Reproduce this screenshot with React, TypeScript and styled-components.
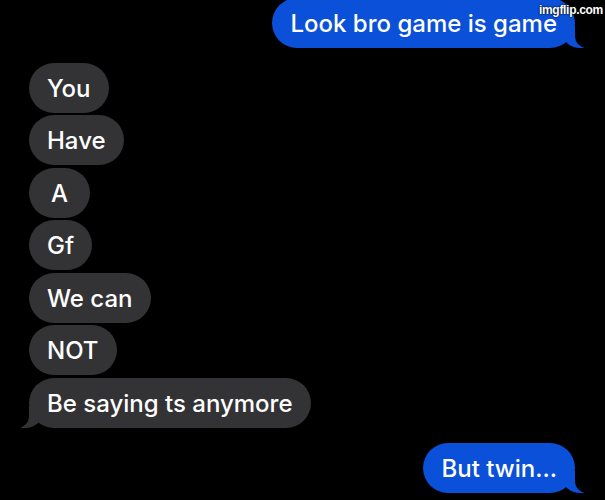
import styled, { createGlobalStyle, css } from 'styled-components';

const GlobalStyle = createGlobalStyle`
    html, body { margin: 0; padding: 0; background: #000; }
    body { width: 605px; height: 500px; overflow: hidden; }
`;

const Thread = styled.div`
    position: relative;
    width: 605px;
    height: 500px;
    background: #000;
    display: flex;
    flex-direction: column;
    padding: 0 30px 0 29px;
    box-sizing: border-box;
    font-family: Inter, "Liberation Sans", sans-serif;
`;

const Watermark = styled.div`
    position: absolute;
    top: 3px;
    right: 2px;
    font-family: "Liberation Sans", Arial, sans-serif;
    font-size: 12px;
    font-weight: 700;
    color: #fff;
    text-shadow: 0 0 2px #000, 0 0 1px #000;
    letter-spacing: -0.3px;
`;

const Bubble = styled.div<{ $sent?: boolean; $tail?: boolean }>`
    position: relative;
    align-self: ${p => (p.$sent ? 'flex-end' : 'flex-start')};
    min-width: 61px;
    box-sizing: border-box;
    text-align: center;
    height: 50px;
    line-height: 51px;
    padding: 0 18px;
    border-radius: 25px;
    color: #fff;
    font-size: 24px;
    font-weight: 500;
    white-space: nowrap;
    background: ${p => (p.$sent ? '#0a50d8' : '#333335')};
    margin-bottom: 2.5px;

    ${p => p.$tail && p.$sent && css`
        &::before {
            content: "";
            position: absolute;
            bottom: 0;
            right: -9px;
            width: 22px;
            height: 22px;
            background: #0a50d8;
            border-bottom-left-radius: 18px 16px;
        }
        &::after {
            content: "";
            position: absolute;
            bottom: 0;
            right: -26px;
            width: 26px;
            height: 24px;
            background: #000;
            border-bottom-left-radius: 12px;
        }
    `}

    ${p => p.$tail && !p.$sent && css`
        &::before {
            content: "";
            position: absolute;
            bottom: 0;
            left: -8px;
            width: 22px;
            height: 22px;
            background: #333335;
            border-bottom-right-radius: 18px 16px;
        }
        &::after {
            content: "";
            position: absolute;
            bottom: 0;
            left: -26px;
            width: 26px;
            height: 24px;
            background: #000;
            border-bottom-right-radius: 12px;
        }
    `}
`;

const Group = styled.div<{ $top: number }>`
    display: flex;
    flex-direction: column;
    margin-top: ${p => p.$top}px;
`;

const received = ['You', 'Have', 'A', 'Gf', 'We can', 'NOT', 'Be saying ts anymore'];

export default function App() {
    return (
        <>
            <GlobalStyle />
            <Thread>
                <Group $top={-2}>
                    <Bubble $sent $tail>Look bro game is game</Bubble>
                </Group>
                <Group $top={12}>
                    {received.map((text, i) => (
                        <Bubble key={text} $tail={i === received.length - 1}>{text}</Bubble>
                    ))}
                </Group>
                <Group $top={13}>
                    <Bubble $sent $tail>But twin...</Bubble>
                </Group>
                <Watermark>imgflip.com</Watermark>
            </Thread>
        </>
    );
}
